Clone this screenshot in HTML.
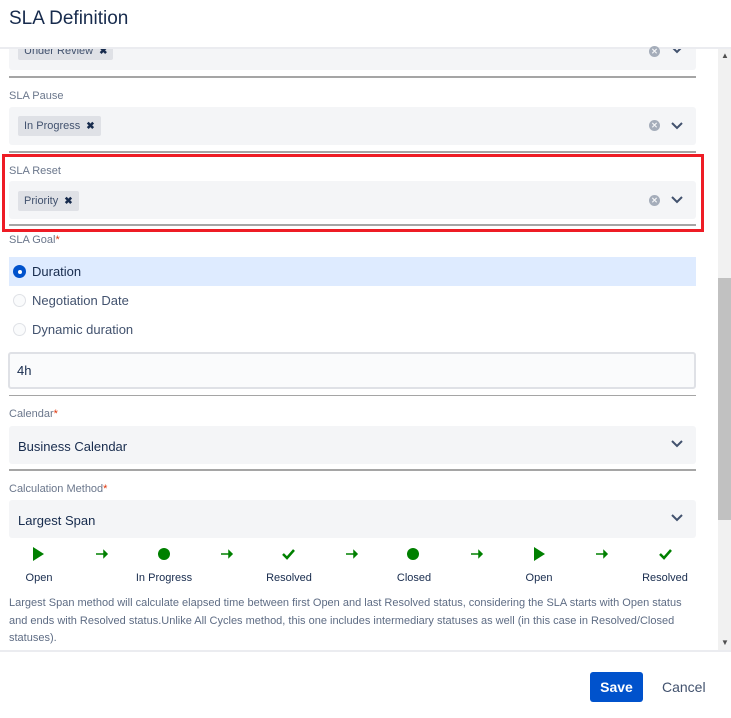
<!DOCTYPE html>
<html><head><meta charset="utf-8"><style>
*{margin:0;padding:0;box-sizing:border-box}
body{width:731px;height:718px;overflow:hidden;background:#fff;font-family:"Liberation Sans",sans-serif;color:#172b4d;position:relative}
.a{position:absolute}
.lbl{position:absolute;left:9px;font-size:11px;color:#6b778c}
.req{color:#de350b}
.box{position:absolute;left:9px;width:687px;background:#f4f5f7;border-radius:3px}
.line{position:absolute;left:9px;width:687px;height:2px;background:#a5a5a5}
.tag{position:absolute;left:9px;background:#dfe1e6;border-radius:2px;font-size:11px;color:#42526e;padding:0 6px;height:20px;line-height:20px}
.tag b{margin-left:6px;font-size:10px;color:#172b4d}
.clr{position:absolute;left:649px;width:11px;height:11px;border-radius:50%;background:#a5adba;color:#f4f5f7;font-size:8px;line-height:11px;text-align:center;font-weight:bold}
.chev{position:absolute;left:671px}
.txt{position:absolute;font-size:13px;color:#172b4d}
.radio{position:absolute;left:13px;width:13px;height:13px;border-radius:50%;border:1px solid #dfe1e6;background:#fafbfc}
.sl{position:absolute;font-size:11px;color:#172b4d;text-align:center;width:80px}
</style></head><body>
<div class="a" style="left:9px;top:8px;font-size:19px;color:#172b4d">SLA Definition</div>

<div class="box" style="top:40px;height:30px"></div>
<div class="tag" style="left:18px;top:42px;height:18px;line-height:18px;overflow:hidden">Under Review<b>✖</b></div>
<div class="a" style="left:0;top:30px;width:731px;height:17px;background:#fff"></div>
<div class="a" style="left:0;top:47px;width:731px;height:2px;background:#ebecf0"></div>
<div class="clr" style="top:46px">✕</div>
<svg class="chev" style="top:49px" width="12" height="5" viewBox="0 3 12 5"><path d="M1 1l5 5 5-5" stroke="#42526e" stroke-width="2" fill="none"/></svg>
<div class="line" style="top:76px"></div>

<div class="lbl" style="top:90px">SLA Pause</div>
<div class="box" style="top:107px;height:38px"></div>
<div class="tag" style="left:18px;top:116px">In Progress<b>✖</b></div>
<div class="clr" style="top:120px">✕</div>
<svg class="chev" style="top:122px" width="12" height="8"><path d="M1 1l5 5 5-5" stroke="#42526e" stroke-width="2" fill="none"/></svg>
<div class="line" style="top:151px"></div>

<div class="a" style="left:2px;top:154px;width:702px;height:78px;border:3px solid #ee1c25"></div>
<div class="lbl" style="top:165px">SLA Reset</div>
<div class="box" style="top:181px;height:38px"></div>
<div class="tag" style="left:18px;top:191px">Priority<b>✖</b></div>
<div class="clr" style="top:195px">✕</div>
<svg class="chev" style="top:196px" width="12" height="8"><path d="M1 1l5 5 5-5" stroke="#42526e" stroke-width="2" fill="none"/></svg>
<div class="line" style="top:224px;height:2px"></div>

<div class="lbl" style="top:234px">SLA Goal<span class="req">*</span></div>
<div class="a" style="left:9px;top:257px;width:687px;height:29px;background:#deebff"></div>
<div class="a" style="left:13px;top:265px;width:13px;height:13px;border-radius:50%;background:#0052cc"><div class="a" style="left:4.5px;top:4.5px;width:4px;height:4px;border-radius:50%;background:#fff"></div></div>
<div class="txt" style="left:32px;top:264px">Duration</div>
<div class="radio" style="top:294px"></div>
<div class="txt" style="left:32px;top:293px;color:#42526e">Negotiation Date</div>
<div class="radio" style="top:323px"></div>
<div class="txt" style="left:32px;top:322px;color:#42526e">Dynamic duration</div>
<div class="a" style="left:8px;top:352px;width:688px;height:37px;border:2px solid #dfe1e6;border-radius:3px;background:#fafbfc"></div>
<div class="txt" style="left:17px;top:363px">4h</div>
<div class="line" style="top:395px;height:1px"></div>

<div class="lbl" style="top:408px">Calendar<span class="req">*</span></div>
<div class="box" style="top:426px;height:38px"></div>
<div class="txt" style="left:18px;top:439px">Business Calendar</div>
<svg class="chev" style="top:440px" width="12" height="8"><path d="M1 1l5 5 5-5" stroke="#42526e" stroke-width="2" fill="none"/></svg>
<div class="line" style="top:469px"></div>

<div class="lbl" style="top:483px">Calculation Method<span class="req">*</span></div>
<div class="box" style="top:500px;height:38px"></div>
<div class="txt" style="left:18px;top:513px">Largest Span</div>
<svg class="chev" style="top:514px" width="12" height="8"><path d="M1 1l5 5 5-5" stroke="#42526e" stroke-width="2" fill="none"/></svg>

<svg class="a" style="left:0;top:545px" width="718" height="20">
<g fill="#008000">
<path d="M33 2l11 7-11 7z"/>
<circle cx="164" cy="9" r="6"/>
<circle cx="413" cy="9" r="6"/>
<path d="M534 2l11 7-11 7z"/>
</g>
<g stroke="#008000" stroke-width="2.5" fill="none">
<path d="M283 9l4 4 7-8"/>
<path d="M660 9l4 4 7-8"/>
</g>
<g stroke="#008000" stroke-width="1.5" fill="#008000">
<path d="M96 9h8"/><path d="M104 6l3 3-3 3z"/>
<path d="M221 9h8"/><path d="M229 6l3 3-3 3z"/>
<path d="M346 9h8"/><path d="M354 6l3 3-3 3z"/>
<path d="M471 9h8"/><path d="M479 6l3 3-3 3z"/>
<path d="M596 9h8"/><path d="M604 6l3 3-3 3z"/>
</g>
</svg>
<div class="sl" style="left:-1px;top:572px">Open</div>
<div class="sl" style="left:124px;top:572px">In Progress</div>
<div class="sl" style="left:249px;top:572px">Resolved</div>
<div class="sl" style="left:374px;top:572px">Closed</div>
<div class="sl" style="left:499px;top:572px">Open</div>
<div class="sl" style="left:625px;top:572px">Resolved</div>
<div class="a" style="left:9px;top:595px;width:700px;font-size:11px;line-height:17.5px;color:#5e6c84;white-space:nowrap">Largest Span method will calculate elapsed time between first Open and last Resolved status, considering the SLA starts with Open status<br>and ends with Resolved status.Unlike All Cycles method, this one includes intermediary statuses as well (in this case in Resolved/Closed<br>statuses).</div>

<div class="a" style="left:718px;top:49px;width:13px;height:601px;background:#f1f1f1"></div>
<div class="a" style="left:718px;top:278px;width:13px;height:242px;background:#c1c1c1"></div>
<div class="a" style="left:721px;top:51px;font-size:8px;color:#505050">▲</div>
<div class="a" style="left:721px;top:638px;font-size:8px;color:#505050">▼</div>
<div class="a" style="left:0;top:650px;width:731px;height:2px;background:#ebecf0"></div>

<div class="a" style="left:590px;top:672px;width:53px;height:30px;background:#0052cc;border-radius:3px;color:#fff;font-size:14px;font-weight:bold;text-align:center;line-height:30px">Save</div>
<div class="a" style="left:662px;top:679px;font-size:14px;color:#42526e">Cancel</div>
</body></html>
